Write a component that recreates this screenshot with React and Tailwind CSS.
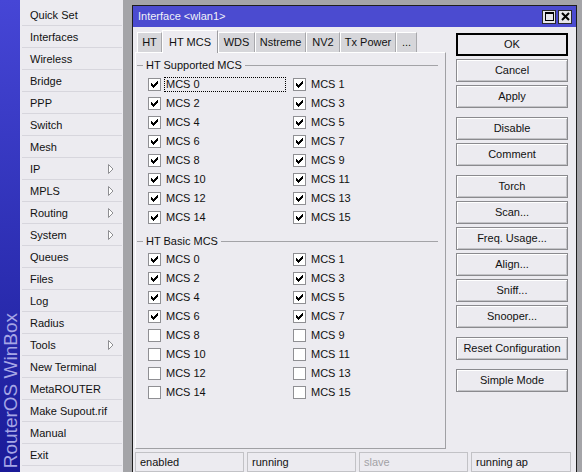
import React from 'react';

const menu = [
  { name: 'Quick Set' },
  { name: 'Interfaces' },
  { name: 'Wireless' },
  { name: 'Bridge' },
  { name: 'PPP' },
  { name: 'Switch' },
  { name: 'Mesh' },
  { name: 'IP', sub: true },
  { name: 'MPLS', sub: true },
  { name: 'Routing', sub: true },
  { name: 'System', sub: true },
  { name: 'Queues' },
  { name: 'Files' },
  { name: 'Log' },
  { name: 'Radius' },
  { name: 'Tools', sub: true },
  { name: 'New Terminal' },
  { name: 'MetaROUTER' },
  { name: 'Make Supout.rif' },
  { name: 'Manual' },
  { name: 'Exit' },
];

const tabs = [
  { name: 'HT', w: 'w-[25px]' },
  { name: 'HT MCS', w: 'w-[56px]', active: true },
  { name: 'WDS', w: 'w-[37px]' },
  { name: 'Nstreme', w: 'w-[51px]' },
  { name: 'NV2', w: 'w-[34px]' },
  { name: 'Tx Power', w: 'w-[56px]' },
  { name: '...', w: 'w-[21px]' },
];

const buttonGroups = [
  ['OK', 'Cancel', 'Apply'],
  ['Disable', 'Comment'],
  ['Torch', 'Scan...', 'Freq. Usage...', 'Align...', 'Sniff...', 'Snooper...'],
  ['Reset Configuration'],
  ['Simple Mode'],
];

const status = [
  { text: 'enabled', w: 'w-[109px]' },
  { text: 'running', w: 'w-[109px]' },
  { text: 'slave', w: 'w-[109px]', dim: true },
  { text: 'running ap', w: 'w-[100px]' },
];

function Arrow() {
  return (
    <svg width="6" height="10" viewBox="0 0 6 10">
      <path d="M0.5 0.5 L5 5 L0.5 9.5 Z" fill="#fff" stroke="#8e8e92" strokeWidth="1" />
    </svg>
  );
}

function Check({ on }) {
  return (
    <span className="flex h-[13px] w-[13px] shrink-0 items-center justify-center border border-[#8f8f93] bg-white">
      {on && (
        <svg width="9" height="9" viewBox="0 0 9 9" shapeRendering="crispEdges">
          <path d="M1 3 L3 5 L8 0 L8 3 L3 8 L1 6 Z" fill="#000" />
        </svg>
      )}
    </span>
  );
}

function McsRow({ n, on, focus }) {
  return (
    <div className="flex h-[19px] items-center">
      {[n, n + 1].map((k, i) => (
        <div key={k} className="flex w-[145px] items-center gap-[3px]">
          <Check on={on} />
          <span
            className={`flex h-[15px] w-[122px] items-center pl-[1px] border ${
              focus && i === 0 ? 'border-dotted border-black' : 'border-transparent'
            }`}
          >
            MCS {k}
          </span>
        </div>
      ))}
    </div>
  );
}

function GroupHeader({ title }) {
  return (
    <div className="-ml-[12px] flex h-[14px] items-center">
      <span className="ml-[1px] h-px w-[6px] bg-[#a3a3a7]" />
      <span className="mx-[3px] whitespace-nowrap">{title}</span>
      <span className="mr-[7px] h-px flex-1 bg-[#a3a3a7]" />
    </div>
  );
}

export default function App() {
  const rows = [0, 2, 4, 6, 8, 10, 12, 14];
  return (
    <div className="flex h-[472px] w-[582px] overflow-hidden font-['Liberation_Sans',Arial,sans-serif] text-[11px] text-[#111]">
      {/* blue brand strip */}
      <div className="flex w-[20px] shrink-0 flex-col items-center justify-end bg-gradient-to-b from-[#4646d6] to-[#1a1a98] pb-[4px]">
        <span className="rotate-180 text-[19px] leading-none text-[#a6a6e6] [writing-mode:vertical-rl]">
          RouterOS WinBox
        </span>
      </div>

      {/* main menu */}
      <div className="w-[103px] shrink-0 bg-[#ecebf0] pt-[4px]">
        {menu.map((m) => (
          <div key={m.name} className="ml-[2px] mr-[1px] flex h-[22px] items-center border-b border-[#d7d6dd] pl-[8px] pr-[8px] pt-px">
            <span className="flex-1 whitespace-nowrap">{m.name}</span>
            {m.sub && <Arrow />}
          </div>
        ))}
      </div>

      {/* workspace */}
      <div className="flex-1 bg-[#a4a4a8] pl-[9px] pr-[5px] pt-[5px]">
        <div className="flex h-[480px] flex-col border border-[#1e1e1e] bg-[#ecebf0]">
          <div className="flex h-[21px] shrink-0 items-center bg-[#4b4bd0] pl-[5px] pr-[4px] text-[#f2f2f8]">
            <span className="flex-1">Interface &lt;wlan1&gt;</span>
            <div className="flex gap-[2px]">
              <span className="flex h-[14px] w-[14px] items-center justify-center border border-[#2a2a2a] bg-[#e6e6ea]">
                <span className="h-[9px] w-[9px] border border-t-2 border-black" />
              </span>
              <span className="flex h-[14px] w-[14px] items-center justify-center border border-[#2a2a2a] bg-[#e6e6ea]">
                <svg width="9" height="9" viewBox="0 0 9 9">
                  <path d="M1 1 L8 8 M8 1 L1 8" stroke="#000" strokeWidth="2" />
                </svg>
              </span>
            </div>
          </div>

          <div className="flex pl-[2px]">
            <div className="w-[311px]">
              <div className="flex h-[25px] items-end pl-[2px]">
                {tabs.map((t) =>
                  t.active ? (
                    <div
                      key={t.name}
                      className={`${t.w} relative z-10 -mb-px flex h-[23px] items-center justify-center whitespace-nowrap border-l border-t border-r border-l-white border-t-white border-r-[#9c9ca0] bg-[#ecebf0]`}
                    >
                      {t.name}
                    </div>
                  ) : (
                    <div
                      key={t.name}
                      className={`${t.w} flex h-[20px] items-center justify-center whitespace-nowrap border-l border-t border-r border-l-white border-t-white border-r-[#a8a8ac] bg-[#d6d6da]`}
                    >
                      {t.name}
                    </div>
                  )
                )}
              </div>
              <div className="h-[397px] border-b border-l border-r border-t border-b-[#a0a0a4] border-l-white border-r-[#a0a0a4] border-t-white pl-[12px] pt-[5px]">
                <GroupHeader title="HT Supported MCS" />
                <div className="mt-[3px]">
                  {rows.map((n) => (
                    <McsRow key={n} n={n} on focus={n === 0} />
                  ))}
                </div>
                <div className="mt-[7px]">
                  <GroupHeader title="HT Basic MCS" />
                </div>
                <div className="mt-[2px]">
                  {rows.map((n) => (
                    <McsRow key={n} n={n} on={n < 8} />
                  ))}
                </div>
              </div>
            </div>

            <div className="ml-[10px] flex w-[112px] flex-col gap-[9px] pt-[6px]">
              {buttonGroups.map((g, gi) => (
                <div key={gi} className="flex flex-col gap-[3px]">
                  {g.map((b) => (
                    <div
                      key={b}
                      className={`flex h-[23px] items-center justify-center whitespace-nowrap ${
                        b === 'OK'
                          ? 'border-2 border-black'
                          : 'border border-[#8a8a8e] shadow-[inset_1px_1px_0_#ffffff,inset_-1px_-1px_0_#c4c4c8]'
                      }`}
                    >
                      {b}
                    </div>
                  ))}
                </div>
              ))}
            </div>
          </div>

          <div className="mt-[3px] flex gap-[3px] pl-[2px]">
            {status.map((s) => (
              <div
                key={s.text}
                className={`${s.w} flex h-[20px] items-center border border-[#c2c2c6] pl-[4px] ${
                  s.dim ? 'text-[#a2a2a6]' : 'text-[#111]'
                }`}
              >
                {s.text}
              </div>
            ))}
          </div>
        </div>
      </div>
    </div>
  );
}
